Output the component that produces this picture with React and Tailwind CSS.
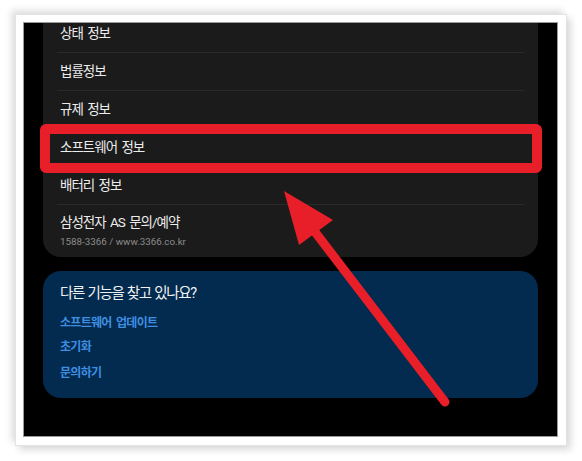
export default function App() {
    const rows = ['상태 정보', '법률정보', '규제 정보', '소프트웨어 정보', '배터리 정보'];
    const links = [
        { label: '소프트웨어 업데이트', mt: 'mt-[11px]' },
        { label: '초기화', mt: 'mt-[8px]' },
        { label: '문의하기', mt: 'mt-[10px]' },
    ];

    return (
        <div className="relative w-[582px] h-[461px] bg-white overflow-hidden" style={{ fontFamily: '"Roboto", "Noto Sans CJK KR", sans-serif' }}>
            {/* PHOTO FRAME */}
            <div className="ml-[15px] mt-[14px] w-[552px] h-[432px] bg-white border border-[#e3e3e3] pl-[7px] pt-[7px] shadow-[-4px_-4px_7px_rgba(0,0,0,0.12),4px_4px_7px_rgba(0,0,0,0.14)]">
                {/* PHONE SCREEN */}
                <div className="relative w-[535px] h-[415px] bg-black overflow-hidden border border-[#9a9a9a] px-[19px]">
                    {/* SETTINGS LIST */}
                    <div className="-mt-[8px] bg-[#1b1b1b] rounded-t-[10px] rounded-b-[18px]">
                        {rows.map((row) => (
                            <div key={row}>
                                <div className="h-[37px] flex items-center pl-[17px] text-[13.5px] tracking-[-1px] [word-spacing:2px] text-[#ececec]">{row}</div>
                                <div className="h-px mx-[14px] bg-[#2a2a2a]" />
                            </div>
                        ))}
                        <div className="pl-[17px] pt-[8px] pb-[8px]">
                            <div className="h-[18px] leading-[18px] text-[13.5px] tracking-[-1px] [word-spacing:2px] text-[#ececec]">삼성전자 AS 문의/예약</div>
                            <div className="mt-[4px] h-[14px] leading-[14px] text-[9.8px] text-[#8c8c8c]">1588-3366 / www.3366.co.kr</div>
                        </div>
                    </div>

                    {/* OTHER FEATURES CARD */}
                    <div className="mt-[14px] h-[127px] bg-[#032a4f] rounded-[18px] pl-[17px] pt-[13px]">
                        <div className="h-[20px] leading-[20px] text-[14.5px] tracking-[-1.3px] [word-spacing:1px] text-[#f2f2f2]">다른 기능을 찾고 있나요?</div>
                        {links.map((link) => (
                            <div key={link.label} className={`${link.mt} h-[16px] leading-[16px] text-[12px] tracking-[-0.7px] [word-spacing:2px] font-semibold text-[#3f8fe0]`}>
                                {link.label}
                            </div>
                        ))}
                    </div>

                    {/* RED HIGHLIGHT BOX */}
                    <div className="absolute left-[16px] top-[101px] w-[502px] h-[49px] border-[10px] border-[#e81e29] rounded-[6px]" />
                </div>
            </div>

            {/* RED ARROW */}
            <svg className="absolute left-0 top-0 pointer-events-none" width="582" height="461" viewBox="0 0 582 461">
                <line x1="312" y1="228" x2="445" y2="402" stroke="#e81e29" strokeWidth="9" strokeLinecap="round" />
                <polygon points="284,191 333,220 299,245" fill="#e81e29" />
            </svg>
        </div>
    );
}
